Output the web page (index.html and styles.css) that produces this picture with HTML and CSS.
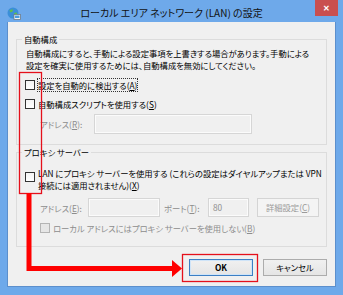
FILE: index.html
```html
<!DOCTYPE html>
<html lang="ja">
<head>
    <meta charset="UTF-8">
    <meta name="viewport" content="width=device-width, initial-scale=1.0">
    <title>ローカル エリア ネットワーク (LAN) の設定</title>
    <link rel="stylesheet" href="styles.css">
</head>
<body>
    <div class="window">
        <div class="titlebar">
            <svg class="app-icon" width="14" height="14" viewBox="0 0 14 14">
                <circle cx="6" cy="6" r="5.5" fill="#3b8fd8"/>
                <path d="M2.5 3.5 Q4 2 6 2.5 L5.5 4.5 L3.5 5.5 Z M7 6 L9.5 5.5 L10.5 8 L8 9.5 Z" fill="#5fbf4a"/>
                <rect x="7" y="7.5" width="6.5" height="5" fill="#f4f4f4" stroke="#6a7a8a" stroke-width="0.8"/>
                <rect x="8" y="8.5" width="4.5" height="2.5" fill="#4a9ee0"/>
            </svg>
            <div class="title">ローカル エリア ネットワーク (LAN) の設定</div>
            <div class="close">✕</div>
        </div>

        <div class="client">
            <fieldset class="group group-auto">
                <legend>自動構成</legend>
                <p class="desc">自動構成にすると、手動による設定事項を上書きする場合があります。手動による<br>設定を確実に使用するためには、自動構成を無効にしてください。</p>
                <div class="check first">
                    <span class="box"></span>
                    <span class="label focus">設定を自動的に検出する(<u>A</u>)</span>
                </div>
                <div class="check">
                    <span class="box"></span>
                    <span class="label">自動構成スクリプトを使用する(<u>S</u>)</span>
                </div>
                <div class="field-row script-row disabled">
                    <span class="field-label">アドレス(<u>R</u>):</span>
                    <span class="input script-input"></span>
                </div>
            </fieldset>

            <fieldset class="group group-proxy">
                <legend>プロキシ サーバー</legend>
                <div class="check multi">
                    <span class="box"></span>
                    <span class="label">LAN にプロキシ サーバーを使用する (これらの設定はダイヤルアップまたは VPN<br>接続には適用されません)(<u>X</u>)</span>
                </div>
                <div class="field-row proxy-row disabled">
                    <span class="field-label addr-label">アドレス(<u>E</u>):</span>
                    <span class="input addr-input"></span>
                    <span class="field-label port-label">ポート(<u>T</u>):</span>
                    <span class="input port-input">80</span>
                    <span class="btn btn-disabled">詳細設定(<u>C</u>)</span>
                </div>
                <div class="check sub disabled">
                    <span class="box"></span>
                    <span class="label">ローカル アドレスにはプロキシ サーバーを使用しない(<u>B</u>)</span>
                </div>
            </fieldset>

            <div class="buttons">
                <button class="btn btn-default">OK</button>
                <button class="btn">キャンセル</button>
            </div>
        </div>

        <!-- 注釈 -->
        <svg class="annotation" width="343" height="295" viewBox="0 0 343 295">
            <rect x="19.5" y="72.5" width="22" height="121" fill="none" stroke="#e5101b" stroke-width="1.3"/>
            <polyline points="29,193 29,268.5 174,268.5" fill="none" stroke="#ff0000" stroke-width="5"/>
            <polygon points="172,260 182,268.5 172,277" fill="#ff0000"/>
            <rect x="182.5" y="254.5" width="75" height="27" fill="none" stroke="#e5101b" stroke-width="1.3"/>
        </svg>
    </div>
</body>
</html>
```

FILE: styles.css
```css
body {
    margin: 0;
    font-family: "Noto Sans CJK JP", "Noto Sans", sans-serif;
    font-size: 8.3px;
    font-feature-settings: "palt";
    color: #000;
}
.window {
    position: relative;
    width: 343px;
    height: 295px;
    background: #6ea9ea;
    display: flex;
    flex-direction: column;
    box-sizing: border-box;
}
.titlebar {
    height: 22px;
    display: grid;
    grid-template-columns: 1fr auto 1fr;
    align-items: start;
}
.app-icon {
    margin: 7px 0 0 7px;
}
.title {
    font-size: 10px;
    line-height: 12px;
    padding-top: 7px;
    color: #111;
    white-space: nowrap;
}
.close {
    justify-self: end;
    width: 23px;
    height: 16px;
    margin-right: 5px;
    background: #c94f4f;
    color: #fff;
    font-size: 8px;
    font-weight: bold;
    line-height: 16px;
    text-align: center;
}
.client {
    flex: 1;
    margin: 0 7px 8px 7px;
    background: #f0f0f0;
    border: 1px solid #5c8fcc;
    border-top: none;
    padding: 0 8px;
}
.group {
    margin: 0;
    padding: 0 0 10px 9px;
    border: 1px solid #dcdcdc;
    min-width: 0;
}
.group legend {
    margin-left: -4px;
    padding: 0 2px;
    line-height: 12px;
}
.group-auto {
    margin-top: 11px;
}
.group-proxy {
    margin-top: 1px;
    padding-top: 9px;
}
.desc {
    margin: 2px 0 0 0;
    line-height: 12px;
    white-space: nowrap;
}
.check {
    display: flex;
    align-items: center;
    height: 16px;
    margin-top: 3px;
}
.check.first {
    margin-top: 6px;
}
.box {
    width: 8px;
    height: 8px;
    border: 1px solid #333;
    background: linear-gradient(#f4f4f4, #fff);
    margin: 0 2px 0 -1px;
    flex: none;
}
.check .label {
    line-height: 14px;
    padding: 0 1px;
    white-space: nowrap;
}
.label.focus {
    outline: 1px dotted #333;
    outline-offset: -1px;
}
.check.multi {
    height: auto;
    margin-top: 0;
    align-items: flex-start;
}
.check.multi .box {
    margin-top: 5px;
}
.check.multi .label {
    line-height: 12px;
}
.check.sub {
    margin-left: 15px;
}
.disabled {
    color: #8d8d8d;
}
.disabled .box {
    border-color: #b4b4b4;
    background: #e6e6e6;
}
.field-row {
    display: flex;
    align-items: center;
    height: 20px;
    padding-left: 14px;
}
.script-row {
    margin-top: 2px;
}
.proxy-row {
    margin-top: 7px;
    height: 19px;
}
.field-label {
    white-space: nowrap;
}
.script-row .field-label {
    width: 54px;
}
.addr-label {
    width: 48px;
}
.port-label {
    width: 44px;
    margin-left: 4px;
}
.input {
    box-sizing: border-box;
    height: 100%;
    border: 1px solid #d6d6d6;
    box-shadow: inset 0 0 0 1px #fbfbfb;
    background: #f0f0f0;
    padding-left: 4px;
    line-height: 17px;
}
.script-input {
    width: 158px;
}
.addr-input {
    width: 72px;
}
.port-input {
    width: 41px;
}
.btn {
    box-sizing: border-box;
    width: 64px;
    height: 17px;
    border: 1px solid #acacac;
    background: linear-gradient(#f0f0f0, #e5e5e5);
    font-family: inherit;
    font-size: 8.3px;
    font-feature-settings: "palt";
    color: #000;
    padding: 0;
    margin: 0;
    line-height: 15px;
    text-align: center;
}
.btn-disabled {
    width: 62px;
    height: 19px;
    line-height: 17px;
    margin-left: 8px;
    border-color: #d4d4d4;
    background: #f4f4f4;
    color: #9a9a9a;
}
.btn-default {
    border-color: #3c7fc4;
    box-shadow: inset 0 0 0 1px #cfe4f8;
    font-weight: bold;
}
.buttons {
    display: flex;
    justify-content: flex-end;
    gap: 10px;
    margin-top: 12px;
}
.annotation {
    position: absolute;
    left: 0;
    top: 0;
    pointer-events: none;
}
```
